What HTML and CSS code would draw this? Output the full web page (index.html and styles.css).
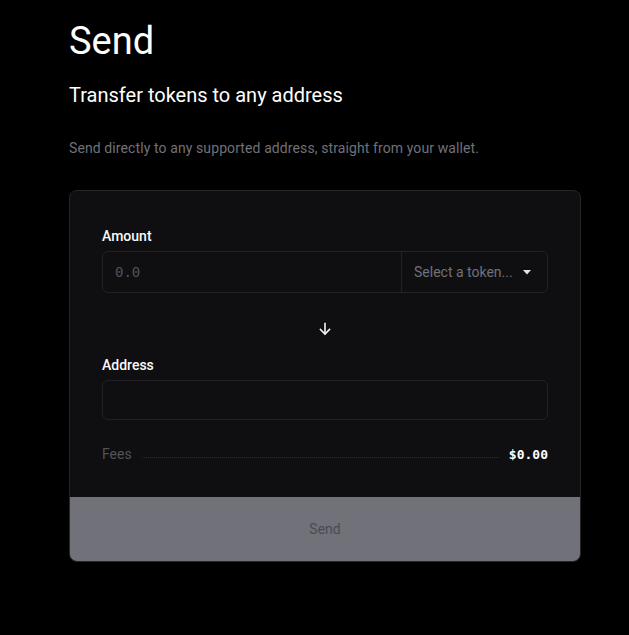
FILE: index.html
```html
<!DOCTYPE html>
<html>
<head>
<meta charset="utf-8">
<link rel="stylesheet" href="styles.css">
</head>
<body>
<main class="page">
  <h1 class="title">Send</h1>
  <h2 class="subtitle">Transfer tokens to any address</h2>
  <p class="desc">Send directly to any supported address, straight from your wallet.</p>
  <section class="card">
    <div class="card-body">
      <label class="label">Amount</label>
      <div class="amount-row">
        <div class="amount-input">0.0</div>
        <div class="token-select">
          <span>Select a token...</span>
          <svg class="caret" width="8" height="5" viewBox="0 0 8 5"><path d="M0 0h8L4 4.5z" fill="#e4e4e7"/></svg>
        </div>
      </div>
      <div class="arrow-row">
        <svg width="14" height="14" viewBox="0 0 14 14" fill="none" stroke="#f4f4f5" stroke-width="1.6" stroke-linecap="square"><path d="M7 1.5v10"/><path d="M2.5 7.5L7 12l4.5-4.5"/></svg>
      </div>
      <label class="label">Address</label>
      <div class="address-input"></div>
      <div class="fees-row">
        <span class="fees-label">Fees</span>
        <span class="dots"></span>
        <span class="fees-value">$0.00</span>
      </div>
    </div>
    <button class="send-btn">Send</button>
  </section>
</main>
</body>
</html>
```
FILE: styles.css
```css
* { box-sizing: border-box; }
html, body { margin: 0; background: #000; }
body { font-family: Roboto, "Noto Sans", sans-serif; color: #fff; }
.page { padding: 16px 0 0 69px; width: 581px; }
.title { margin: 0; font-size: 38px; font-weight: 400; line-height: 50px; letter-spacing: 0; }
.subtitle { margin: 15px 0 0; font-size: 20px; font-weight: 400; line-height: 28px; }
.desc { margin: 29px 0 0; font-size: 14px; line-height: 20px; color: #71717a; letter-spacing: 0.1px; }
.card { margin-top: 32px; border: 1px solid #26262a; border-radius: 8px; background: #0f0f11; overflow: hidden; }
.card-body { padding: 35px 32px 35px; }
.label { display: block; font-size: 14px; font-weight: 500; line-height: 20px; color: #fafafa; }
.amount-row { margin-top: 5px; display: flex; height: 42px; border: 1px solid #222226; border-radius: 6px; }
.amount-input { flex: 1; padding-left: 12px; display: flex; align-items: center; font-family: "DejaVu Sans Mono", monospace; font-size: 14px; color: #52525b; }
.token-select { width: 146px; border-left: 1px solid #222226; display: flex; align-items: center; padding-left: 12px; gap: 10px; font-size: 14px; color: #71717a; }
.arrow-row { display: flex; justify-content: center; padding: 29px 0 19px; }
.address-input { margin-top: 5px; height: 40px; border: 1px solid #222226; border-radius: 6px; }
.fees-row { margin-top: 26px; display: flex; align-items: center; gap: 10px; font-size: 14px; }
.fees-label { color: #52525b; }
.dots { flex: 1; border-bottom: 1px dotted #2a2a2e; margin-top: 6px; }
.fees-value { font-family: "DejaVu Sans Mono", monospace; font-weight: 700; font-size: 13px; color: #fff; }
.send-btn { display: block; width: 100%; height: 64px; border: 0; background: #71717a; color: #4a4a52; font-family: inherit; font-size: 14px; }
```
